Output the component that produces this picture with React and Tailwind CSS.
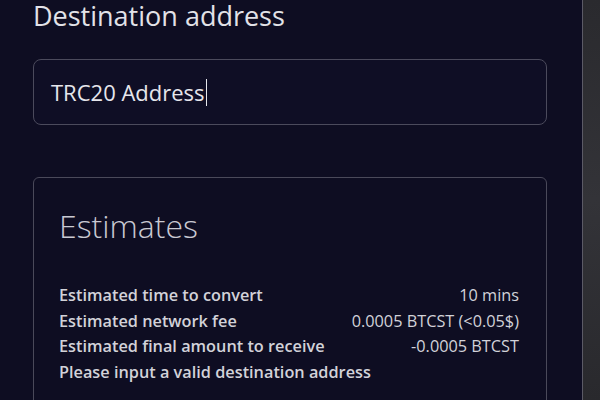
const rows = [
  ["Estimated time to convert", "10 mins"],
  ["Estimated network fee", "0.0005 BTCST (<0.05$)"],
  ["Estimated final amount to receive", "-0.0005 BTCST"],
  ["Please input a valid destination address", ""],
];

export default function App() {
  return (
    <div className="flex h-[400px] w-[600px] overflow-hidden bg-[#0e0d22] font-['Open_Sans','Noto_Sans',sans-serif]">
      <div className="flex-1 pl-[33px] pr-[35px]">
        <h2 className="pt-px text-[27px] font-medium leading-[30px] text-[#e2e2e8]">Destination address</h2>

        {/* address input */}
        <div className="mt-[28px] flex h-[66px] items-center rounded-lg border border-[#4b4a5c] bg-[#0f0e25] pl-[17px]">
          <span className="text-[22px] text-[#e6e6ec]">TRC20 Address</span>
          <span className="ml-px h-[27px] w-px bg-[#e6e6ec]" />
        </div>

        {/* estimates card */}
        <div className="mt-[52px] h-[260px] rounded-md border border-[#4a495a] pl-[25px] pr-[27px] pt-[28px]">
          <h3 className="text-[32px] font-light leading-10 text-[#c9c9d2]">Estimates</h3>
          <div className="mt-[37px] text-[16.3px] leading-[25.5px] text-[#d2d2d9]">
            {rows.map(([label, value]) => (
              <div key={label} className="flex justify-between">
                <span className="font-semibold">{label}</span>
                <span>{value}</span>
              </div>
            ))}
          </div>
        </div>
      </div>
      <div className="w-[18px] border-l border-[#5b5a66] bg-gradient-to-b from-[#2a2a2e] via-[#333338] to-[#29292d]" />
    </div>
  );
}
